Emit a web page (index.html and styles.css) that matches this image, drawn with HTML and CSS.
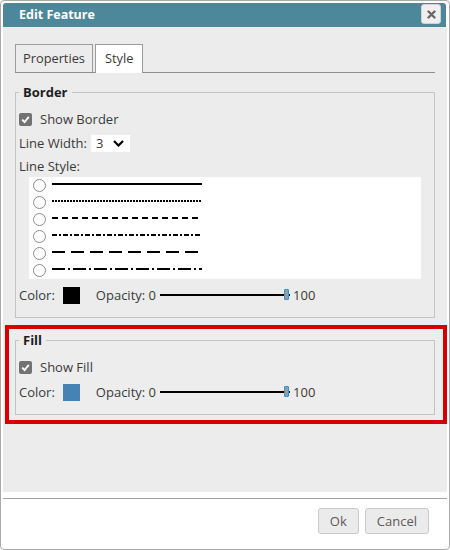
FILE: index.html
```html
<!DOCTYPE html>
<html lang="en">
<head>
<meta charset="utf-8">
<title>Edit Feature</title>
<link rel="stylesheet" href="styles.css">
</head>
<body>
<div class="dialog">
  <div class="titlebar">
    <span class="title">Edit Feature</span>
    <button class="close" aria-label="Close">
      <svg width="9" height="9" viewBox="0 0 9 9"><path d="M1.5 1.5 L7.5 7.5 M7.5 1.5 L1.5 7.5" stroke="#666" stroke-width="2.3" stroke-linecap="round"/></svg>
    </button>
  </div>
  <div class="content">
    <div class="tabs">
      <div class="tab">Properties</div>
      <div class="tab active">Style</div>
    </div>
    <fieldset class="group border-group">
      <legend>Border</legend>
      <div class="row">
        <span class="check"><svg width="9" height="9" viewBox="0 0 9 9"><path d="M1.2 4.6 L3.6 7 L7.8 1.8" fill="none" stroke="#fff" stroke-width="1.9"/></svg></span>
        <span>Show Border</span>
      </div>
      <div class="row">
        <span>Line Width:</span>
        <span class="select"><span>3</span><svg width="11" height="7" viewBox="0 0 11 7"><path d="M1 1 L5.5 5.5 L10 1" fill="none" stroke="#000" stroke-width="2.2"/></svg></span>
      </div>
      <div class="row label-row">Line Style:</div>
      <div class="styles">
        <div class="style-row"><span class="radio"></span><svg class="line" width="150" height="17"><line x1="0" y1="7" x2="150" y2="7" stroke="#000" stroke-width="2"/></svg></div>
        <div class="style-row"><span class="radio"></span><svg class="line" width="150" height="17"><line x1="0" y1="7" x2="150" y2="7" stroke="#000" stroke-width="2" stroke-dasharray="2 1"/></svg></div>
        <div class="style-row"><span class="radio"></span><svg class="line" width="150" height="17"><line x1="0" y1="7" x2="146" y2="7" stroke="#000" stroke-width="2" stroke-dasharray="6 4"/></svg></div>
        <div class="style-row"><span class="radio"></span><svg class="line" width="150" height="17"><line x1="0" y1="7" x2="150" y2="7" stroke="#000" stroke-width="2" stroke-dasharray="5 2 2 2"/></svg></div>
        <div class="style-row"><span class="radio"></span><svg class="line" width="150" height="17"><line x1="0" y1="7" x2="150" y2="7" stroke="#000" stroke-width="2" stroke-dasharray="13 6"/></svg></div>
        <div class="style-row"><span class="radio"></span><svg class="line" width="150" height="17"><line x1="0" y1="7" x2="150" y2="7" stroke="#000" stroke-width="2" stroke-dasharray="13 3 2 3"/></svg></div>
      </div>
      <div class="row color-row">
        <span>Color:</span>
        <span class="swatch black"></span>
        <span>Opacity: 0</span>
        <span class="slider"><span class="track"></span><span class="thumb"></span></span>
        <span>100</span>
      </div>
    </fieldset>
    <div class="highlight">
      <fieldset class="group fill-group">
        <legend>Fill</legend>
        <div class="row">
          <span class="check"><svg width="9" height="9" viewBox="0 0 9 9"><path d="M1.2 4.6 L3.6 7 L7.8 1.8" fill="none" stroke="#fff" stroke-width="1.9"/></svg></span>
          <span>Show Fill</span>
        </div>
        <div class="row color-row fill-color">
          <span>Color:</span>
          <span class="swatch blue"></span>
          <span>Opacity: 0</span>
          <span class="slider"><span class="track"></span><span class="thumb"></span></span>
          <span>100</span>
        </div>
      </fieldset>
    </div>
  </div>
  <div class="footer">
    <button class="btn">Ok</button>
    <button class="btn">Cancel</button>
  </div>
</div>
</body>
</html>
```
FILE: styles.css
```css
html, body {
  margin: 0;
  background: #fff;
}
body {
  font-family: "Open Sans", "Noto Sans", sans-serif;
  font-size: 13px;
  color: #3a3a3a;
}
.dialog {
  width: 450px;
  height: 550px;
  box-sizing: border-box;
  border: 1px solid #a9a9a9;
  border-radius: 4px;
  padding: 2px;
  display: flex;
  flex-direction: column;
  background: #fff;
}
.titlebar {
  flex: none;
  height: 24px;
  background: #4d879a;
  border-radius: 3px 3px 0 0;
  display: flex;
  align-items: flex-start;
  justify-content: space-between;
  padding: 0 5px 0 16px;
  margin-right: 1px;
}
.title {
  color: #fff;
  font-weight: bold;
  font-size: 12.5px;
  line-height: 24px;
}
.close {
  width: 20px;
  height: 20px;
  margin-top: 1px;
  padding: 0;
  box-sizing: border-box;
  border: 1px solid #d2d2d2;
  border-radius: 3px;
  background: #efefef;
  display: flex;
  align-items: center;
  justify-content: center;
}
.content {
  flex: 1;
  background: #ebeceb;
  padding: 17px 12px 0;
}
.tabs {
  display: flex;
  gap: 2px;
  border-bottom: 1px solid #8e8e8e;
  height: 28px;
}
.tab {
  height: 28px;
  box-sizing: border-box;
  border: 1px solid #9c9c9c;
  border-bottom: none;
  padding: 0 7px;
  font-size: 12.8px;
  line-height: 27px;
  background: #ebeceb;
}
.tab.active {
  background: #fff;
  height: 29px;
  padding: 0 9px;
}
.group {
  margin: 11px 0 0;
  padding: 7px 3px 10px;
  border: 1px solid #c3c3c3;
  min-width: 0;
}
.group legend {
  padding: 0 4px;
  font-weight: bold;
  line-height: 16px;
  color: #1e1e1e;
}
.row {
  height: 24px;
  display: flex;
  align-items: center;
}
.label-row {
  height: 22px;
}
.check {
  width: 13px;
  height: 13px;
  box-sizing: border-box;
  border-radius: 2px;
  background: #727272;
  display: flex;
  align-items: center;
  justify-content: center;
  margin-right: 8px;
}
.select {
  margin-left: 4px;
  width: 39px;
  height: 17px;
  background: #fff;
  display: flex;
  align-items: center;
  gap: 10px;
  padding-left: 5px;
  box-sizing: border-box;
}
.styles {
  margin: 0 10px;
  background: #fff;
  padding: 0 0 0 4px;
}
.style-row {
  height: 17px;
  display: flex;
  align-items: center;
}
.radio {
  width: 13px;
  height: 13px;
  box-sizing: border-box;
  border: 1px solid #8d8d8d;
  border-radius: 50%;
  background: #fff;
  margin-right: 6px;
}
.line {
  display: block;
}
.color-row {
  margin-top: 4px;
}
.fill-color {
  margin-top: 1px;
}
.swatch {
  width: 17px;
  height: 17px;
  margin: 0 16px 0 8px;
}
.swatch.black { background: #000; }
.swatch.blue { background: #4682b4; }
.slider {
  position: relative;
  width: 130px;
  height: 12px;
  margin: 0 3px 0 4px;
  display: flex;
  align-items: center;
}
.track {
  width: 100%;
  height: 2.5px;
  background: #000;
}
.thumb {
  position: absolute;
  right: 1px;
  top: 0;
  width: 5px;
  height: 11px;
  box-sizing: border-box;
  background: #9b9b9b;
  border: 1px solid #2f93dc;
  border-radius: 1px;
}
.highlight {
  margin: 7px -12px 0 -10px;
  border: 4px solid #d50000;
  padding: 3px 8px 5px 6px;
  background: #ededed;
}
.highlight .group {
  margin-top: 0;
}
.footer {
  flex: none;
  margin-top: 6px;
  height: 49px;
  box-sizing: border-box;
  border-top: 1px solid #a3a3a3;
  display: flex;
  justify-content: flex-end;
  align-items: flex-start;
  gap: 6px;
  padding: 9px 18px 0 0;
}
.btn {
  height: 26px;
  padding: 0 11px;
  font-family: inherit;
  font-size: 13px;
  color: #5a5a5a;
  background: #ebebeb;
  border: 1px solid #c9c9c9;
  border-radius: 3px;
}
```
